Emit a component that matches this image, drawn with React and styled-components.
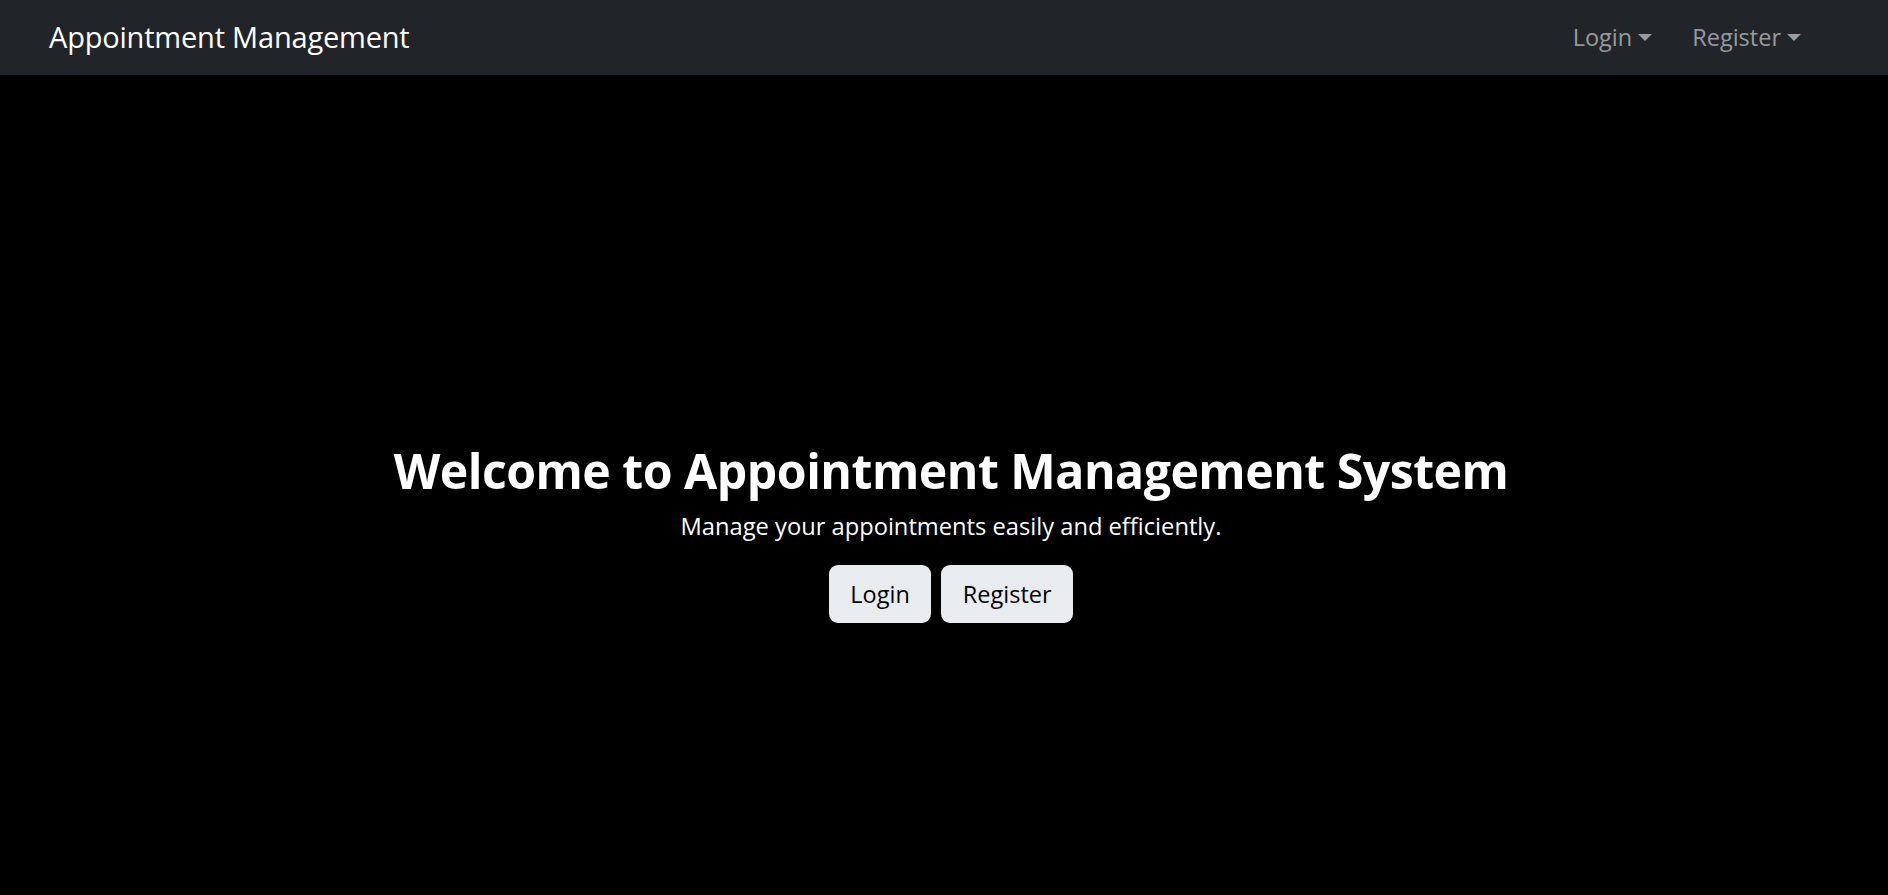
import React from "react";
import styled, { createGlobalStyle } from "styled-components";

const Global = createGlobalStyle`
  html, body { margin: 0; padding: 0; background: #000; }
  body { font-family: "Open Sans", "Noto Sans", sans-serif; color: #fff; }
  * { box-sizing: border-box; }
`;

const NavBar = styled.nav`
  height: 75px;
  background: #212529;
  display: flex;
  align-items: center;
  justify-content: space-between;
  padding: 0 87px 0 49px;
`;

const Brand = styled.a`
  font-size: 29px;
  color: #fff;
  text-decoration: none;
  letter-spacing: -0.2px;
  margin-top: -2px;
`;

const NavLinks = styled.ul`
  display: flex;
  list-style: none;
  margin: -2px 0 0;
  padding: 0;
  gap: 40px;
`;

const NavLink = styled.li`
  font-size: 23.5px;
  color: rgba(255, 255, 255, 0.55);
  display: flex;
  align-items: center;
  gap: 6px;
  cursor: pointer;
  &::after {
    content: "";
    border-top: 7px solid rgba(255, 255, 255, 0.55);
    border-left: 7px solid transparent;
    border-right: 7px solid transparent;
    margin-top: 2px;
  }
`;

const Hero = styled.main`
  height: 100vh;
  display: flex;
  flex-direction: column;
  align-items: center;
  justify-content: center;
  padding: 18px 0 0 14px;
  text-align: center;
`;

const Title = styled.h1`
  margin: 0 0 8px;
  font-size: 48.2px;
  font-weight: 700;
  line-height: 60px;
  letter-spacing: -0.5px;
`;

const Subtitle = styled.p`
  margin: 0 0 21px;
  font-size: 23.7px;
  line-height: 36px;
`;

const Buttons = styled.div`
  display: flex;
  gap: 10px;
`;

const Button = styled.button`
  height: 58px;
  padding: 0 21.5px;
  background: #e9ecef;
  color: #000;
  border: none;
  border-radius: 9px;
  font-family: inherit;
  font-size: 23.5px;
  cursor: pointer;
`;

export default function App() {
  return (
    <>
      <Global />
      <NavBar>
        <Brand href="#">Appointment Management</Brand>
        <NavLinks>
          <NavLink>Login</NavLink>
          <NavLink>Register</NavLink>
        </NavLinks>
      </NavBar>
      <Hero>
        <Title>Welcome to Appointment Management System</Title>
        <Subtitle>Manage your appointments easily and efficiently.</Subtitle>
        <Buttons>
          <Button>Login</Button>
          <Button>Register</Button>
        </Buttons>
      </Hero>
    </>
  );
}
